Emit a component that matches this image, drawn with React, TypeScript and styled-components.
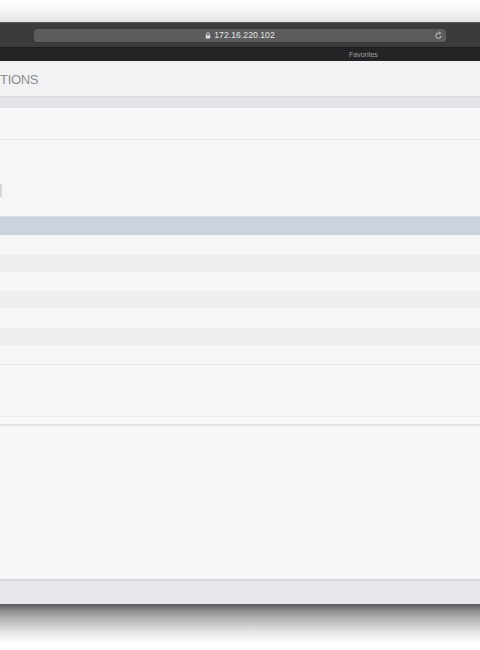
import React from 'react';
import styled, { createGlobalStyle } from 'styled-components';

const rows = [
  { height: 19, tone: 'selected' },
  { height: 20, tone: 'plain' },
  { height: 17, tone: 'striped' },
  { height: 19, tone: 'plain' },
  { height: 17, tone: 'striped' },
  { height: 20, tone: 'plain' },
  { height: 17, tone: 'striped' },
  { height: 19, tone: 'plain' },
] as const;

type Tone = (typeof rows)[number]['tone'];

const rowColors: Record<Tone, string> = {
  selected: '#cbd3dd',
  plain: '#f6f6f6',
  striped: '#efefef',
};

const App: React.FC = () => {
  return (
    <>
      <GlobalStyle />
      <Screen>
        <TopShade />
        <Toolbar>
          <AddressBar>
            <LockIcon viewBox="0 0 8 9">
              <path d="M2 4V2.8a2 2 0 0 1 4 0V4" fill="none" stroke="#e0e0e0" strokeWidth="1.1" />
              <rect x="1" y="4" width="6" height="4.6" rx="0.6" fill="#e0e0e0" />
            </LockIcon>
            <Url>172.16.220.102</Url>
            <ReloadIcon viewBox="0 0 10 10">
              <path d="M8 5.2A3 3 0 1 1 5 2.2h1.6" fill="none" stroke="#d4d4d4" strokeWidth="1" />
              <path d="M5.8 0.9l1.6 1.3-1.6 1.3" fill="none" stroke="#d4d4d4" strokeWidth="1" />
            </ReloadIcon>
          </AddressBar>
        </Toolbar>
        <FavoritesBar>
          <FavoritesLabel>Favorites</FavoritesLabel>
        </FavoritesBar>

        <PageHeader>
          <PageTitle>TIONS</PageTitle>
        </PageHeader>
        <PatternBand />
        <SubBar />

        <Intro>
          <ClippedMark />
        </Intro>

        <Table>
          {rows.map((row, i) => (
            <Row key={i} $height={row.height} $tone={row.tone} />
          ))}
        </Table>

        <Section />
        <Divider />
        <Body />
        <FooterBand />
        <BottomShade />
      </Screen>
    </>
  );
};

const GlobalStyle = createGlobalStyle`
  html, body {
    margin: 0;
    padding: 0;
    background: #ffffff;
  }

  body {
    font-family: "Liberation Sans", Arial, sans-serif;
  }
`;

const Screen = styled.div`
  width: 480px;
  height: 650px;
  display: flex;
  flex-direction: column;
  overflow: hidden;
`;

const TopShade = styled.div`
  height: 22px;
  flex-shrink: 0;
  background: linear-gradient(#ffffff 0%, #f7f7f7 40%, #e6e6e6 100%);
`;

const Toolbar = styled.div`
  height: 25px;
  flex-shrink: 0;
  display: flex;
  align-items: center;
  padding: 0 34px;
  background: #3b3b3d;
  border-top: 1px solid #58585a;
  box-sizing: border-box;
`;

const AddressBar = styled.div`
  position: relative;
  flex: 1;
  height: 13px;
  display: flex;
  align-items: center;
  justify-content: center;
  gap: 3px;
  border-radius: 3px;
  background: #5c5c5e;
`;

const LockIcon = styled.svg`
  width: 6px;
  height: 7px;
`;

const Url = styled.span`
  font-size: 8.5px;
  color: #e4e4e4;
  letter-spacing: 0.1px;
`;

const ReloadIcon = styled.svg`
  position: absolute;
  right: 3px;
  top: 2px;
  width: 9px;
  height: 9px;
`;

const FavoritesBar = styled.div`
  height: 14px;
  flex-shrink: 0;
  display: flex;
  align-items: center;
  padding-left: 349px;
  background: #242426;
  border-top: 1px solid #1c1c1e;
  box-sizing: border-box;
`;

const FavoritesLabel = styled.span`
  font-size: 7px;
  color: #a2a2a4;
`;

const PageHeader = styled.div`
  height: 36px;
  flex-shrink: 0;
  display: flex;
  align-items: center;
  padding-top: 1px;
  box-sizing: border-box;
  background: #f2f2f4;
  border-bottom: 1px solid #dcdde2;
`;

const PageTitle = styled.h1`
  margin: 0;
  font-size: 13px;
  font-weight: 400;
  letter-spacing: -0.3px;
  color: #8e8e90;
`;

const PatternBand = styled.div`
  height: 11px;
  flex-shrink: 0;
  background: #e4e5ea;
`;

const SubBar = styled.div`
  height: 31px;
  flex-shrink: 0;
  background: #f7f7f9;
  border-bottom: 1px solid #e8e8ea;
`;

const Intro = styled.div`
  height: 76px;
  flex-shrink: 0;
  display: flex;
  align-items: flex-start;
  padding-top: 44px;
  box-sizing: border-box;
  background: #f6f6f6;
`;

const ClippedMark = styled.div`
  width: 2px;
  height: 13px;
  background: #d6d6db;
`;

const Table = styled.div`
  display: flex;
  flex-direction: column;
  flex-shrink: 0;
`;

const Row = styled.div<{ $height: number; $tone: Tone }>`
  height: ${({ $height }) => $height}px;
  background: ${({ $tone }) => rowColors[$tone]};
  ${({ $tone }) => $tone === 'selected' && 'border-top: 1px solid #dfe3e8; box-sizing: border-box;'}
`;

const Section = styled.div`
  height: 52px;
  flex-shrink: 0;
  background: #f6f6f6;
  border-top: 1px solid #e6e6ea;
  box-sizing: border-box;
`;

const Divider = styled.div`
  height: 10px;
  flex-shrink: 0;
  background: #f8f8f9;
  border-top: 1px solid #ebebed;
  border-bottom: 2px solid #e2e3ea;
  box-sizing: border-box;
`;

const Body = styled.div`
  height: 153px;
  flex-shrink: 0;
  background: #f7f7f7;
`;

const FooterBand = styled.div`
  height: 25px;
  flex-shrink: 0;
  background: #e8e8ec;
  border-top: 2px solid #d7d8dc;
  box-sizing: border-box;
`;

const BottomShade = styled.div`
  flex: 1;
  background: linear-gradient(#5d5d5f 0%, #8e8e8e 15%, #b9b9b9 35%, #e4e4e4 60%, #ffffff 85%);
`;

export default App;
